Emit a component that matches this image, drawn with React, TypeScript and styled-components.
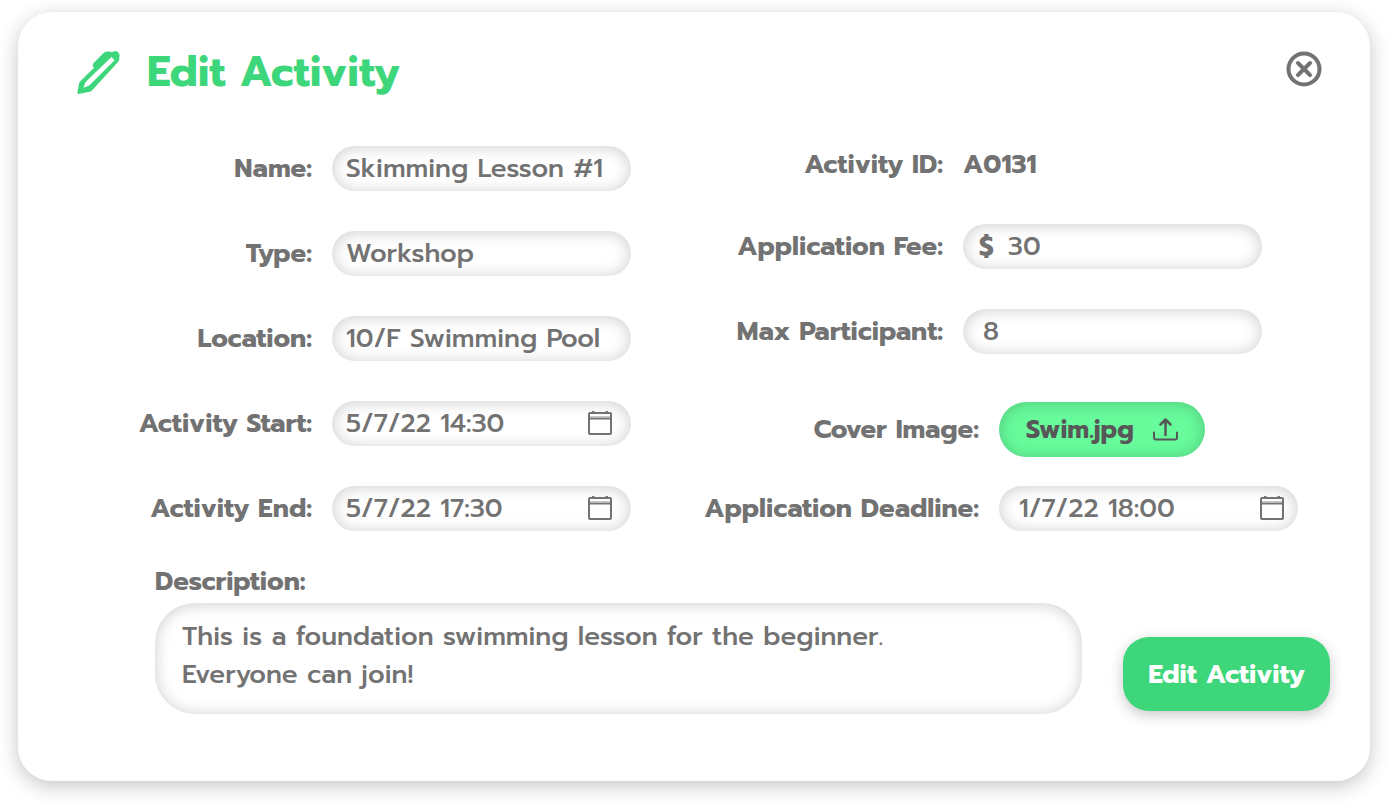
import React from 'react';
import styled, { createGlobalStyle } from 'styled-components';

const GlobalStyle = createGlobalStyle`
  *, *::before, *::after { box-sizing: border-box; }
  body {
    margin: 0;
    background: #ffffff;
    color: #727272;
    font-family: Prompt, Inter, "Liberation Sans", sans-serif;
  }
  button, input, textarea { font: inherit; color: inherit; }
`;

const Page = styled.main`
  padding: 12px 18px 24px;
`;

const Card = styled.form`
  padding-bottom: 67px;
  border-radius: 34px;
  background: #ffffff;
  box-shadow: 0 5px 20px rgba(0, 0, 0, 0.23);
`;

const Header = styled.header`
  display: flex;
  align-items: flex-start;
  gap: 27px;
  height: 134px;
  padding: 39px 48px 0 59px;
`;

const Title = styled.h1`
  flex: 1;
  margin: 0;
  font-size: 42px;
  line-height: 42px;
  font-weight: 700;
  color: #3ed67a;
`;

const CloseButton = styled.button`
  display: flex;
  padding: 0;
  border: 0;
  background: none;
  cursor: pointer;
`;

const Columns = styled.div`
  display: flex;
  align-items: flex-start;
`;

const Column = styled.div<{ $share: number }>`
  flex: ${(p) => p.$share} 1 0;
  min-width: 0;
`;

const Group = styled.div<{ $gap?: number; $inset?: number; $top?: number }>`
  display: flex;
  flex-direction: column;
  gap: ${(p) => p.$gap ?? 40}px;
  margin-top: ${(p) => p.$top ?? 0}px;
  padding-right: ${(p) => p.$inset ?? 0}px;
`;

const Row = styled.div`
  display: flex;
  align-items: center;
  gap: 20px;
`;

const Label = styled.label`
  flex: 1;
  font-size: 26px;
  line-height: 38px;
  font-weight: 700;
  text-align: right;
  white-space: nowrap;
`;

const Cell = styled.div`
  width: 299px;
`;

const Output = styled.output`
  display: block;
  font-size: 26px;
  line-height: 38px;
  font-weight: 700;
`;

const Shell = styled.div<{ $indent?: number; $end?: number }>`
  display: flex;
  align-items: center;
  gap: 14px;
  width: 299px;
  height: 45px;
  padding: 0 ${(p) => p.$end ?? 19}px 0 ${(p) => p.$indent ?? 14}px;
  border-radius: 23px;
  background: #ffffff;
  box-shadow: inset 0 1px 16px rgba(0, 0, 0, 0.2);
`;

const Input = styled.input`
  flex: 1;
  width: 100%;
  min-width: 0;
  padding: 0;
  border: 0;
  outline: 0;
  background: none;
  font-size: 26px;
  font-weight: 500;
  line-height: 38px;
`;

const Currency = styled.span`
  font-size: 26px;
  font-weight: 700;
`;

const UploadButton = styled.button`
  display: flex;
  align-items: center;
  justify-content: space-between;
  width: 206px;
  height: 55px;
  padding: 0 27px;
  border: 0;
  border-radius: 28px;
  background: #67fb9b;
  box-shadow: inset 0 1px 16px rgba(0, 0, 0, 0.2);
  color: #575757;
  font-size: 25px;
  font-weight: 700;
  cursor: pointer;
`;

const Footer = styled.div`
  display: flex;
  align-items: flex-end;
  gap: 41px;
  margin-top: 32px;
  padding: 0 40px 0 137px;
`;

const Description = styled.div`
  flex: 1;
  display: flex;
  flex-direction: column;
  align-items: flex-start;
  gap: 2px;
`;

const TextArea = styled.textarea`
  display: block;
  width: 100%;
  height: 111px;
  padding: 15px 27px;
  border: 0;
  outline: 0;
  border-radius: 40px;
  background: #ffffff;
  box-shadow: inset 0 1px 16px rgba(0, 0, 0, 0.2);
  font-size: 26px;
  font-weight: 500;
  line-height: 38px;
  resize: none;
  overflow: hidden;
`;

const SubmitButton = styled.button`
  width: 207px;
  height: 74px;
  margin-bottom: 3px;
  padding: 0;
  border: 0;
  border-radius: 26px;
  background: #3ed67a;
  box-shadow: 0 4px 14px rgba(0, 0, 0, 0.22);
  color: #ffffff;
  font-size: 26px;
  font-weight: 700;
  cursor: pointer;
`;

const PenIcon = () => (
  <svg width="43" height="44" viewBox="0 1 43 44" fill="#3ed67a" fillRule="evenodd" aria-hidden="true">
    <path d="M1.300 44Q.2 43.800 .4 42.500L2 33.500Q2.300 32.200 3.300 31.200L17 17.800Q14.800 15.800 16.400 13.300L26 3.500Q28 1.600 30 1.600H33L35 2.300L37 1.200Q39.500 .8 41 2.200Q42.900 4 42.600 6.200L42 8Q43 10 41 12L15.200 40.200Q14.200 41.400 12.900 41.800ZM34.500 7L8.600 32L6.400 37.800L12.200 35.500L37.600 10.200Z" />
  </svg>
);

const CloseIcon = () => (
  <svg width="36" height="36" viewBox="0 0 36 36" fill="none" stroke="#727272" strokeWidth="4" strokeLinecap="round" aria-hidden="true">
    <circle cx="18" cy="18" r="15.5" />
    <path d="M12 12l12 12M24 12L12 24" />
  </svg>
);

const CalendarIcon = () => (
  <svg width="24" height="26" viewBox="0 0 24 26" fill="none" stroke="#727272" strokeWidth="2" aria-hidden="true">
    <rect x="1" y="2" width="22" height="21" rx="1" />
    <path d="M1 7.500h22" />
    <path d="M2 5.500h20" strokeWidth="1" stroke="#c8c8c8" />
    <path d="M4 .5h2.500M17.500 .5H20" strokeWidth="1" />
  </svg>
);

const UploadIcon = () => (
  <svg width="25" height="24" viewBox="0 0 25 24" fill="none" stroke="#575757" strokeWidth="2" strokeLinecap="round" strokeLinejoin="round" aria-hidden="true">
    <path d="M12.500 17V2M7.500 6.500l5-5 5 5" strokeWidth="2.500" />
    <path d="M1 14.500v5a2 2 0 0 0 2 2h19a2 2 0 0 0 2-2v-5" />
  </svg>
);

type FieldProps = {
  id: string;
  label: string;
  value: string;
  indent?: number;
  end?: number;
  prefix?: string;
  calendar?: boolean;
};

const Field = ({ id, label, value, indent, end, prefix, calendar }: FieldProps) => (
  <Row>
    <Label htmlFor={id}>{label}</Label>
    <Shell $indent={indent} $end={end}>
      {prefix && <Currency>{prefix}</Currency>}
      <Input id={id} type="text" defaultValue={value} />
      {calendar && <CalendarIcon />}
    </Shell>
  </Row>
);

export default function App() {
  return (
    <Page>
      <GlobalStyle />
      <Card onSubmit={(e) => e.preventDefault()}>
        <Header>
          <PenIcon />
          <Title>Edit Activity</Title>
          <CloseButton type="button" aria-label="Close">
            <CloseIcon />
          </CloseButton>
        </Header>
        <Columns>
          <Column $share={613}>
            <Group>
              <Field id="name" label="Name:" value="Skimming Lesson #1" />
              <Field id="type" label="Type:" value="Workshop" />
              <Field id="location" label="Location:" value="10/F Swimming Pool" />
              <Field id="start" label="Activity Start:" value="5/7/22 14:30" calendar />
              <Field id="end" label="Activity End:" value="5/7/22 17:30" calendar />
            </Group>
          </Column>
          <Column $share={739}>
            <Group $inset={108}>
              <Row>
                <Label htmlFor="activity-id">Activity ID:</Label>
                <Cell>
                  <Output id="activity-id">A0131</Output>
                </Cell>
              </Row>
              <Field id="fee" label="Application Fee:" value="30" prefix="$" indent={16} />
              <Field id="max" label="Max Participant:" value="8" indent={20} />
            </Group>
            <Group $inset={72} $gap={29} $top={48}>
              <Row>
                <Label htmlFor="cover">Cover Image:</Label>
                <Cell>
                  <UploadButton id="cover" type="button">
                    Swim.jpg
                    <UploadIcon />
                  </UploadButton>
                </Cell>
              </Row>
              <Field id="deadline" label="Application Deadline:" value="1/7/22 18:00" indent={20} end={14} calendar />
            </Group>
          </Column>
        </Columns>
        <Footer>
          <Description>
            <Label htmlFor="description">Description:</Label>
            <TextArea
              id="description"
              defaultValue={'This is a foundation swimming lesson for the beginner.\nEveryone can join!'}
            />
          </Description>
          <SubmitButton type="submit">Edit Activity</SubmitButton>
        </Footer>
      </Card>
    </Page>
  );
}
